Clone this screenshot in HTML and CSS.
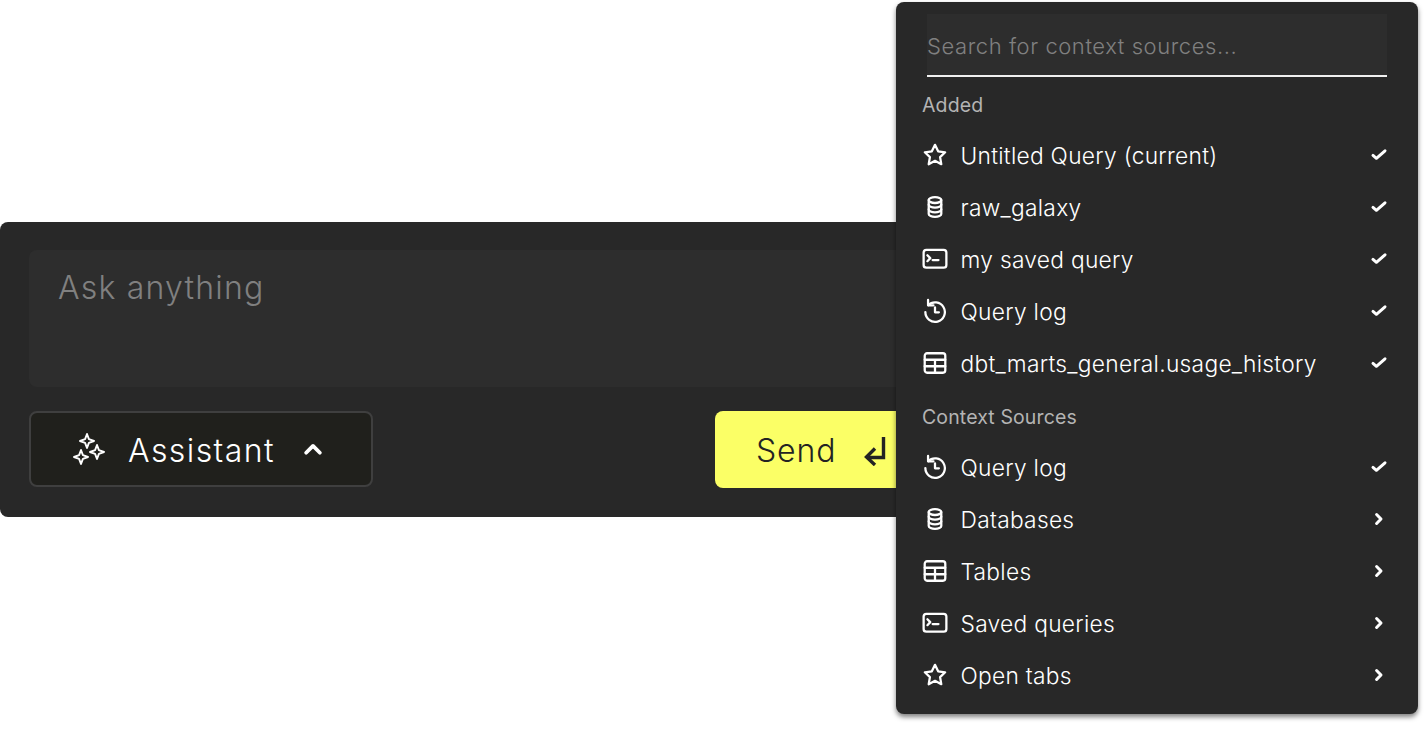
FILE: index.html
```html
<!DOCTYPE html>
<html lang="en">
<head>
<meta charset="utf-8">
<title>Assistant</title>
<link rel="stylesheet" href="styles.css">
</head>
<body>
<svg class="defs" width="0" height="0" aria-hidden="true">
  <defs>
    <symbol id="i-star" viewBox="0 0 24 24"><path d="M12 2.600l2.900 6 6.500.9-4.700 4.500 1.100 6.500-5.800-3.100-5.800 3.100 1.100-6.500-4.700-4.500 6.500-.9z"/></symbol>
    <symbol id="i-db" viewBox="0 0 24 24"><ellipse cx="12" cy="5.600" rx="5.800" ry="2.700"/><path d="M6.200 5.600v12.800c0 1.500 2.600 2.700 5.800 2.700s5.800-1.200 5.800-2.700V5.600"/><path d="M6.200 9.900c0 1.500 2.600 2.700 5.800 2.700s5.800-1.200 5.800-2.700"/><path d="M6.200 14.200c0 1.500 2.600 2.700 5.800 2.700s5.800-1.200 5.800-2.700"/></symbol>
    <symbol id="i-term" viewBox="0 0 24 24"><rect x="1.500" y="3.500" width="21" height="16.500" rx="2.500"/><path d="M5 8.500l2.600 2.700L5 14"/><path d="M9.800 13h5.400"/></symbol>
    <symbol id="i-hist" viewBox="0 0 24 24"><path d="M5.600 1.800v5h5"/><path d="M5.700 6.700A9 9 0 1 1 3.100 13"/><path d="M12 8.600v4.600h3.600"/></symbol>
    <symbol id="i-table" viewBox="0 0 24 24"><rect x="2.500" y="3" width="19" height="18" rx="2.200"/><path d="M2.500 9h19M2.500 15h19M12 9v12"/></symbol>
    <symbol id="i-check" viewBox="0 0 20 20"><path d="M4 10.400l3.400 2.900L16 5.800"/></symbol>
    <symbol id="i-chev" viewBox="0 0 20 20"><path d="M7.600 5.500L12 10l-4.400 4.500"/></symbol>
  </defs>
</svg>

<main class="stage">
  <section class="panel">
    <div class="prompt">Ask anything</div>
    <div class="actions">
      <button class="assistant" type="button">
        <svg class="sparkle" viewBox="0 0 32 32"><path d="M14 1l1.900 5.100L21 8l-5.100 1.900L14 15l-1.900-5.100L7 8l5.100-1.900z"/><path d="M24 12l1.900 5.100L31 19l-5.100 1.900L24 26l-1.900-5.100L17 19l5.100-1.900z"/><path d="M8 17l1.900 5.100L15 24l-5.100 1.900L8 31l-1.900-5.100L1 24l5.100-1.900z"/></svg>
        <span>Assistant</span>
        <svg class="caret" viewBox="0 0 16 16"><path d="M2.500 11L8 5.500 13.500 11"/></svg>
      </button>
      <button class="send" type="button">
        <span>Send</span>
        <svg class="enter" viewBox="0 0 24 30"><path d="M19.500 1v20.500H3"/><path d="M11 12.500L2.500 21l8.500 8"/></svg>
      </button>
    </div>
  </section>

  <aside class="menu">
    <div class="search">Search for context sources...</div>
    <h2 class="group first">Added</h2>
    <ul class="list">
      <li class="row"><svg class="ico"><use href="#i-star"/></svg><span class="label">Untitled Query (current)</span><svg class="end"><use href="#i-check"/></svg></li>
      <li class="row"><svg class="ico"><use href="#i-db"/></svg><span class="label">raw_galaxy</span><svg class="end"><use href="#i-check"/></svg></li>
      <li class="row"><svg class="ico"><use href="#i-term"/></svg><span class="label">my saved query</span><svg class="end"><use href="#i-check"/></svg></li>
      <li class="row"><svg class="ico"><use href="#i-hist"/></svg><span class="label">Query log</span><svg class="end"><use href="#i-check"/></svg></li>
      <li class="row"><svg class="ico"><use href="#i-table"/></svg><span class="label">dbt_marts_general.usage_history</span><svg class="end"><use href="#i-check"/></svg></li>
    </ul>
    <h2 class="group">Context Sources</h2>
    <ul class="list">
      <li class="row"><svg class="ico"><use href="#i-hist"/></svg><span class="label">Query log</span><svg class="end"><use href="#i-check"/></svg></li>
      <li class="row"><svg class="ico"><use href="#i-db"/></svg><span class="label">Databases</span><svg class="end"><use href="#i-chev"/></svg></li>
      <li class="row"><svg class="ico"><use href="#i-table"/></svg><span class="label">Tables</span><svg class="end"><use href="#i-chev"/></svg></li>
      <li class="row"><svg class="ico"><use href="#i-term"/></svg><span class="label">Saved queries</span><svg class="end"><use href="#i-chev"/></svg></li>
      <li class="row"><svg class="ico"><use href="#i-star"/></svg><span class="label">Open tabs</span><svg class="end"><use href="#i-chev"/></svg></li>
    </ul>
  </aside>
</main>
</body>
</html>
```

FILE: styles.css
```css
* { box-sizing: border-box; }

html, body {
  margin: 0;
  height: 100%;
  background: #fff;
  font-family: Inter, "Liberation Sans", sans-serif;
  overflow: hidden;
}

.defs { position: absolute; }

.stage {
  position: relative;
  width: 1427px;
  height: 729px;
  padding-top: 222px;
}

.panel {
  width: 1000px;
  height: 295px;
  padding: 28px 29px 29px;
  background: #282828;
  border-radius: 8px;
}

.prompt {
  height: 137px;
  padding: 19px 29px;
  background: #2d2d2d;
  border-radius: 8px;
  color: #808080;
  font-size: 32px;
  font-weight: 350;
  letter-spacing: 1.2px;
  line-height: 38px;
}

.actions {
  display: flex;
  justify-content: space-between;
  margin-top: 24px;
}

.assistant {
  display: flex;
  align-items: center;
  width: 344px;
  height: 76px;
  padding: 0 0 0 42px;
  background: #20201c;
  border: 2px solid #3f3f3f;
  border-radius: 8px;
  color: #fff;
  font: inherit;
  font-size: 32px;
  font-weight: 350;
  letter-spacing: 1.4px;
}

.sparkle {
  width: 32px;
  height: 32px;
  flex: none;
  fill: none;
  stroke: #fff;
  stroke-width: 1.9;
  stroke-linejoin: round;
}

.assistant span { margin: 2px 0 0 23px; }

.caret {
  width: 20px;
  height: 20px;
  flex: none;
  margin-left: 28px;
  fill: none;
  stroke: #fff;
  stroke-width: 3;
  stroke-linecap: round;
  stroke-linejoin: round;
}

.send {
  display: flex;
  align-items: center;
  width: 256px;
  height: 77px;
  padding: 0 0 0 41px;
  background: #fbff66;
  border: 0;
  border-radius: 8px;
  color: #232323;
  font: inherit;
  font-size: 32px;
  font-weight: 350;
  letter-spacing: 0.9px;
}

.send span { margin-top: 2px; }

.enter {
  width: 24px;
  height: 30px;
  flex: none;
  margin: 3px 0 0 28px;
  fill: none;
  stroke: #232323;
  stroke-width: 3.4;
}

.menu {
  position: absolute;
  left: 896px;
  top: 2px;
  width: 522px;
  height: 712px;
  padding: 12px 31px 0 26px;
  background: #282828;
  border-radius: 8px;
  box-shadow: 0 3px 5px rgba(0, 0, 0, 0.5);
  color: #fff;
}

.search {
  height: 63px;
  margin-left: 5px;
  padding-top: 18px;
  background: #2d2d2d;
  border-bottom: 2px solid #f0f0f0;
  color: #808080;
  font-size: 22px;
  font-weight: 350;
  letter-spacing: 0.57px;
  line-height: 28px;
}

.group {
  margin: 0;
  height: 36px;
  color: #b4b4b4;
  font-size: 19.5px;
  font-weight: 400;
  letter-spacing: 0.12px;
  line-height: 24px;
}

.group.first { margin-top: 16px; }

.list {
  list-style: none;
  margin: 0 0 16px;
  padding: 0;
}

.row {
  display: flex;
  align-items: center;
  height: 52px;
  font-size: 22.75px;
  font-weight: 350;
  letter-spacing: 0.28px;
}

.ico {
  flex: none;
  width: 26px;
  height: 26px;
  fill: none;
  stroke: #fff;
  stroke-width: 2.1;
  stroke-linecap: round;
  stroke-linejoin: round;
}

.label {
  flex: 1;
  margin-left: 12.5px;
  white-space: nowrap;
}

.end {
  flex: none;
  width: 20px;
  height: 20px;
  margin-right: -2px;
  fill: none;
  stroke: #fff;
  stroke-width: 3;
  stroke-linecap: round;
  stroke-linejoin: round;
}
```
